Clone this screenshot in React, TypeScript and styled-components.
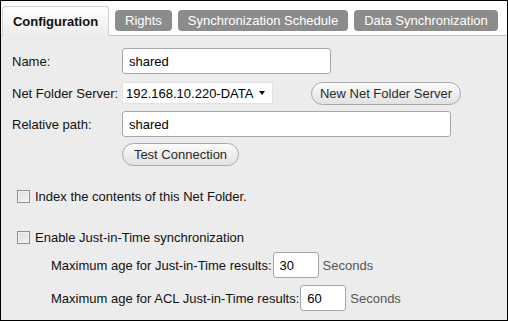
import styled, { createGlobalStyle } from 'styled-components';

const GlobalStyle = createGlobalStyle`
  html, body {
    margin: 0;
    padding: 0;
    background: #ffffff;
  }
  * {
    box-sizing: border-box;
  }
`;

const tabs = ['Rights', 'Synchronization Schedule', 'Data Synchronization'];

export function App() {
  return (
    <Frame>
      <GlobalStyle />
      <TabBar>
        <ActiveTab>Configuration</ActiveTab>
        {tabs.map(t => (
          <Tab key={t}>{t}</Tab>
        ))}
      </TabBar>
      <Panel>
        <FormRow height={26}>
          <Label>Name:</Label>
          <TextInput width={209} defaultValue="shared" />
        </FormRow>
        <FormRow height={22} gap={8}>
          <Label>Net Folder Server:</Label>
          <Select>
            192.168.10.220-DATA
            <Caret />
          </Select>
          <PillButton width={150} offset={38}>New Net Folder Server</PillButton>
        </FormRow>
        <FormRow height={26} gap={7}>
          <Label>Relative path:</Label>
          <TextInput width={329} defaultValue="shared" />
        </FormRow>
        <FormRow height={23} gap={6}>
          <Label />
          <PillButton width={117}>Test Connection</PillButton>
        </FormRow>

        <CheckRow gap={24}>
          <CheckBox />
          Index the contents of this Net Folder.
        </CheckRow>
        <CheckRow gap={28}>
          <CheckBox />
          Enable Just-in-Time synchronization
        </CheckRow>

        <AgeRow gap={8}>
          Maximum age for Just-in-Time results:
          <SmallInput defaultValue="30" />
          <Unit>Seconds</Unit>
        </AgeRow>
        <AgeRow gap={7}>
          Maximum age for ACL Just-in-Time results:
          <SmallInput defaultValue="60" />
          <Unit>Seconds</Unit>
        </AgeRow>
      </Panel>
    </Frame>
  );
}

const Frame = styled.div`
  width: 508px;
  height: 321px;
  border: 1px solid #000;
  display: flex;
  flex-direction: column;
  font-family: 'Liberation Sans', Arial, sans-serif;
  font-size: 13px;
  color: #111;
  background: #fff;
`;

const TabBar = styled.div`
  height: 35px;
  display: flex;
  align-items: flex-end;
  padding-left: 1px;
  gap: 6px;
  border-bottom: 1px solid #c4c4c4;
`;

const ActiveTab = styled.div`
  width: 107px;
  height: 30px;
  margin-bottom: -1px;
  display: flex;
  align-items: center;
  justify-content: center;
  padding-bottom: 1px;
  font-weight: bold;
  color: #111;
  border: 1px solid #cfcfcf;
  border-bottom: none;
  border-radius: 4px 4px 0 0;
  background: linear-gradient(#ffffff, #ececec);
`;

const Tab = styled.div`
  height: 21px;
  margin-bottom: 4px;
  padding: 0 10px;
  display: flex;
  align-items: center;
  color: #fff;
  background: #8c8c8c;
  border-radius: 4px;
`;

const Panel = styled.div`
  flex: 1;
  background: #ececec;
  padding: 12px 0 0 11px;
  display: flex;
  flex-direction: column;
`;

const FormRow = styled.div<{ height: number; gap?: number }>`
  display: flex;
  align-items: center;
  height: ${p => p.height}px;
  margin-top: ${p => p.gap || 0}px;
`;

const Label = styled.span`
  width: 110px;
  flex-shrink: 0;
  color: #111;
`;

const TextInput = styled.input<{ width: number }>`
  width: ${p => p.width}px;
  height: 26px;
  border: 1px solid #a6a6a6;
  border-radius: 3px;
  background: #fff;
  padding: 0 6px;
  font-family: inherit;
  font-size: 13px;
  color: #000;
  outline: none;
`;

const Select = styled.div`
  width: 151px;
  height: 22px;
  background: #fff;
  border: 1px solid #e2e2e2;
  display: flex;
  align-items: center;
  justify-content: space-between;
  padding: 0 3px;
  color: #000;
`;

const Caret = styled.span`
  width: 0;
  height: 0;
  margin-right: 4px;
  border-left: 3.5px solid transparent;
  border-right: 3.5px solid transparent;
  border-top: 4px solid #000;
`;

const PillButton = styled.div<{ width: number; offset?: number }>`
  width: ${p => p.width}px;
  height: 23px;
  margin-left: ${p => p.offset || 0}px;
  display: flex;
  align-items: center;
  justify-content: center;
  border: 1px solid #a9a9a9;
  border-radius: 12px;
  background: linear-gradient(#fbfbfb, #e2e2e2);
  color: #2a2a2a;
`;

const CheckRow = styled.div<{ gap: number }>`
  display: flex;
  align-items: center;
  height: 13px;
  margin-top: ${p => p.gap}px;
  padding-left: 5px;
  gap: 5px;
`;

const CheckBox = styled.span`
  width: 13px;
  height: 13px;
  border: 1px solid #8f8f8f;
  background: linear-gradient(135deg, #dcdcdc, #f6f6f6);
  box-shadow: inset 0 0 0 1px #f2f2f2;
`;

const AgeRow = styled.div<{ gap: number }>`
  display: flex;
  align-items: center;
  height: 26px;
  margin-top: ${p => p.gap}px;
  padding-left: 39px;
`;

const SmallInput = styled.input`
  width: 46px;
  height: 26px;
  margin-left: 1px;
  border: 1px solid #a6a6a6;
  border-radius: 3px;
  background: #fff;
  padding: 0 6px;
  font-family: inherit;
  font-size: 13px;
  color: #000;
  outline: none;
`;

const Unit = styled.span`
  margin-left: 4px;
  color: #555;
`;

export default App;
